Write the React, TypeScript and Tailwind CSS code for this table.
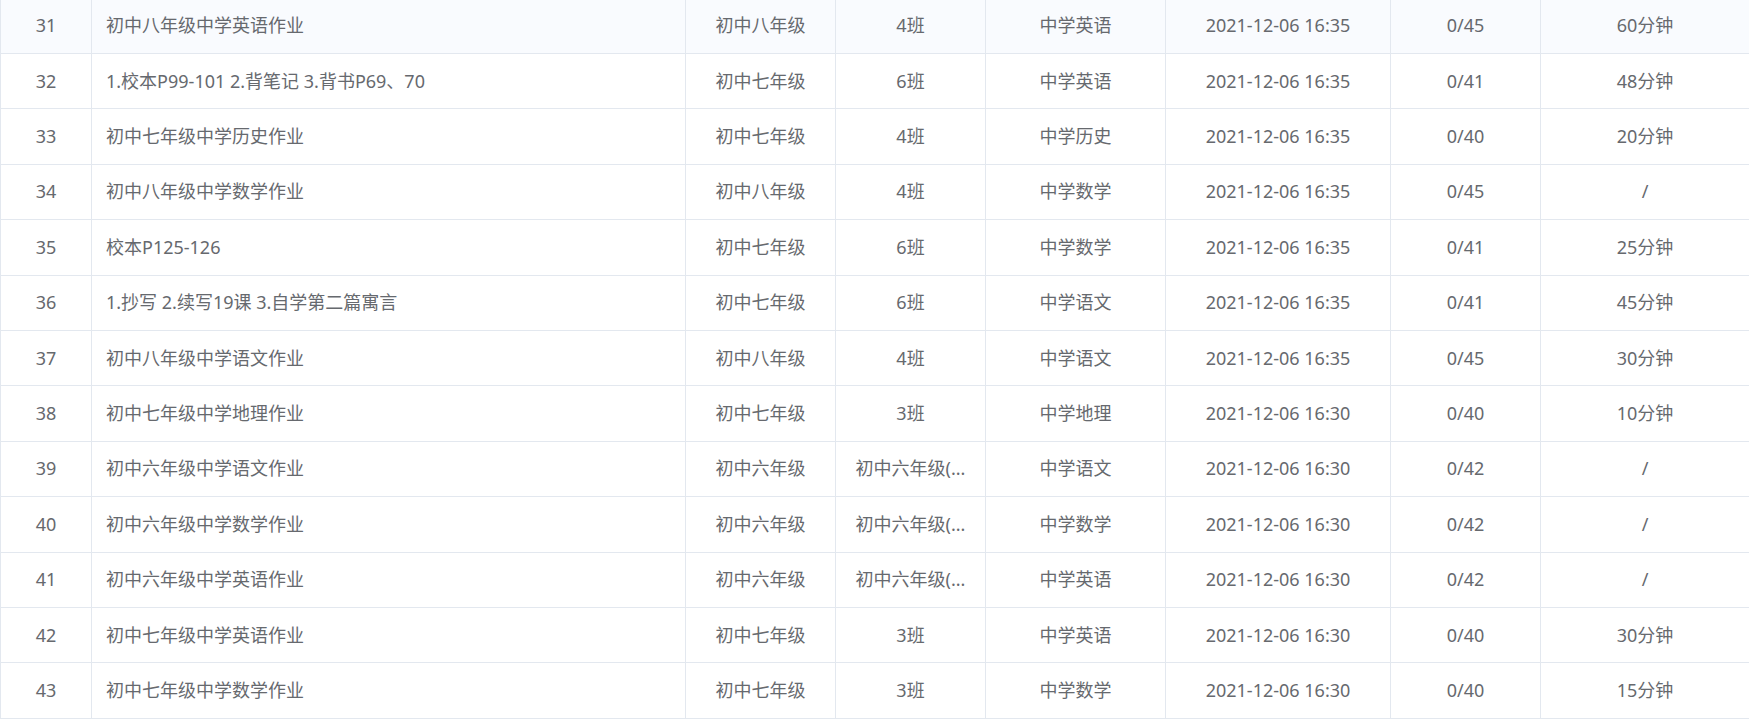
import React from "react";

type Row = {
  no: number;
  title: string;
  grade: string;
  cls: string;
  subject: string;
  time: string;
  done: string;
  duration: string;
};

const rows: Row[] = [
  { no: 31, title: "初中八年级中学英语作业", grade: "初中八年级", cls: "4班", subject: "中学英语", time: "2021-12-06 16:35", done: "0/45", duration: "60分钟" },
  { no: 32, title: "1.校本P99-101 2.背笔记 3.背书P69、70", grade: "初中七年级", cls: "6班", subject: "中学英语", time: "2021-12-06 16:35", done: "0/41", duration: "48分钟" },
  { no: 33, title: "初中七年级中学历史作业", grade: "初中七年级", cls: "4班", subject: "中学历史", time: "2021-12-06 16:35", done: "0/40", duration: "20分钟" },
  { no: 34, title: "初中八年级中学数学作业", grade: "初中八年级", cls: "4班", subject: "中学数学", time: "2021-12-06 16:35", done: "0/45", duration: "/" },
  { no: 35, title: "校本P125-126", grade: "初中七年级", cls: "6班", subject: "中学数学", time: "2021-12-06 16:35", done: "0/41", duration: "25分钟" },
  { no: 36, title: "1.抄写 2.续写19课 3.自学第二篇寓言", grade: "初中七年级", cls: "6班", subject: "中学语文", time: "2021-12-06 16:35", done: "0/41", duration: "45分钟" },
  { no: 37, title: "初中八年级中学语文作业", grade: "初中八年级", cls: "4班", subject: "中学语文", time: "2021-12-06 16:35", done: "0/45", duration: "30分钟" },
  { no: 38, title: "初中七年级中学地理作业", grade: "初中七年级", cls: "3班", subject: "中学地理", time: "2021-12-06 16:30", done: "0/40", duration: "10分钟" },
  { no: 39, title: "初中六年级中学语文作业", grade: "初中六年级", cls: "初中六年级(...", subject: "中学语文", time: "2021-12-06 16:30", done: "0/42", duration: "/" },
  { no: 40, title: "初中六年级中学数学作业", grade: "初中六年级", cls: "初中六年级(...", subject: "中学数学", time: "2021-12-06 16:30", done: "0/42", duration: "/" },
  { no: 41, title: "初中六年级中学英语作业", grade: "初中六年级", cls: "初中六年级(...", subject: "中学英语", time: "2021-12-06 16:30", done: "0/42", duration: "/" },
  { no: 42, title: "初中七年级中学英语作业", grade: "初中七年级", cls: "3班", subject: "中学英语", time: "2021-12-06 16:30", done: "0/40", duration: "30分钟" },
  { no: 43, title: "初中七年级中学数学作业", grade: "初中七年级", cls: "3班", subject: "中学数学", time: "2021-12-06 16:30", done: "0/40", duration: "15分钟" },
];

function Cell({ children, left, last }: { children: React.ReactNode; left?: boolean; last?: boolean }) {
  return (
    <div
      className={`flex items-center min-w-0 border-b border-[#e3e8ef] ${last ? "" : "border-r"} ${
        left ? "justify-start pl-[14px] pr-3" : "justify-center px-2"
      }`}
    >
      <span className="whitespace-nowrap">{children}</span>
    </div>
  );
}

export default function App() {
  return (
    <div className="w-[1749px] h-[720px] overflow-hidden bg-white">
      <div
        className="mt-[-1.4px] border-l border-[#e3e8ef] text-[18px] text-[#66696e]"
        style={{ fontFamily: '"Noto Sans", "Noto Sans CJK SC", sans-serif' }}
      >
        {rows.map((r, i) => (
          <div
            key={r.no}
            className={`grid grid-cols-[91px_594px_150px_150px_180px_225px_150px_1fr] h-[55.4px] ${
              i === 0 ? "bg-[#f9fbfe]" : "bg-white"
            }`}
          >
            <Cell>{r.no}</Cell>
            <Cell left>{r.title}</Cell>
            <Cell>{r.grade}</Cell>
            <Cell>{r.cls}</Cell>
            <Cell>{r.subject}</Cell>
            <Cell>{r.time}</Cell>
            <Cell>{r.done}</Cell>
            <Cell last>{r.duration}</Cell>
          </div>
        ))}
      </div>
    </div>
  );
}
